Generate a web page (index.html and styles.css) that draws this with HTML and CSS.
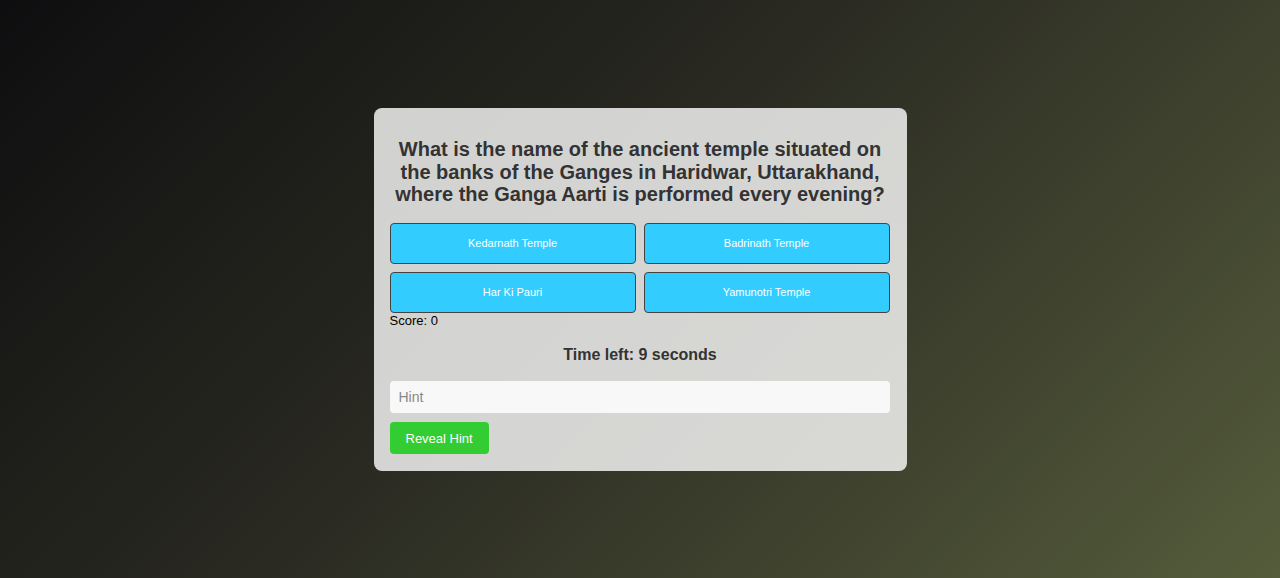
FILE: index.html
```html
<!DOCTYPE html>
<html lang="en">
<head>
<meta charset="utf-8">
<title>Quiz</title>
<link rel="stylesheet" href="styles.css">
</head>
<body>
<main class="page">
  <section class="card">
    <h2 class="question">What is the name of the ancient temple situated on the banks of the Ganges in Haridwar, Uttarakhand, where the Ganga Aarti is performed every evening?</h2>
    <div class="options">
      <button class="option">Kedarnath Temple</button>
      <button class="option">Badrinath Temple</button>
      <button class="option">Har Ki Pauri</button>
      <button class="option">Yamunotri Temple</button>
    </div>
    <div class="score">Score: 0</div>
    <p class="timer">Time left: 9 seconds</p>
    <input class="hint" type="text" placeholder="Hint">
    <button class="reveal">Reveal Hint</button>
  </section>
</main>
</body>
</html>
```

FILE: styles.css
```css
html, body {
  margin: 0;
  height: 100%;
}
body {
  font-family: "Liberation Sans", Arial, sans-serif;
  background: linear-gradient(135deg, #0e0e10 0%, #2a2a22 45%, #555c3b 100%);
  background-attachment: fixed;
}
.page {
  display: flex;
  justify-content: center;
  align-items: flex-start;
  padding-top: 108px;
}
.card {
  width: 501px;
  padding: 16px;
  background: rgba(255, 255, 255, 0.8);
  border-radius: 8px;
  display: flex;
  flex-direction: column;
}
.question {
  margin: 14px 0 17px;
  font-size: 20px;
  line-height: 22.5px;
  font-weight: bold;
  color: #333;
  text-align: center;
}
.options {
  display: grid;
  grid-template-columns: 1fr 1fr;
  gap: 8px;
  width: 500px;
}
.option {
  height: 41px;
  background: #33ccff;
  border: 1px solid #444;
  border-radius: 4px;
  color: #fff;
  font-family: "Liberation Sans", Arial, sans-serif;
  font-size: 11px;
  padding: 0 0 1px;
}
.score {
  font-size: 13px;
  line-height: 15px;
  color: #000;
}
.timer {
  margin: 18px 0 17px;
  font-size: 16px;
  line-height: 18px;
  font-weight: bold;
  color: #333;
  text-align: center;
}
.hint {
  box-sizing: border-box;
  width: 500px;
  height: 32px;
  padding: 0 9px;
  border: none;
  border-radius: 4px;
  background: #f8f8f8;
  font-family: "Liberation Sans", Arial, sans-serif;
  font-size: 14px;
  color: #333;
  outline: none;
}
.hint::placeholder {
  color: #888;
}
.reveal {
  align-self: flex-start;
  margin-top: 9px;
  margin-bottom: 1px;
  height: 32px;
  padding: 1px 16px 0;
  background: #33cc33;
  border: none;
  border-radius: 4px;
  color: #fff;
  font-family: "Liberation Sans", Arial, sans-serif;
  font-size: 13px;
}
```
